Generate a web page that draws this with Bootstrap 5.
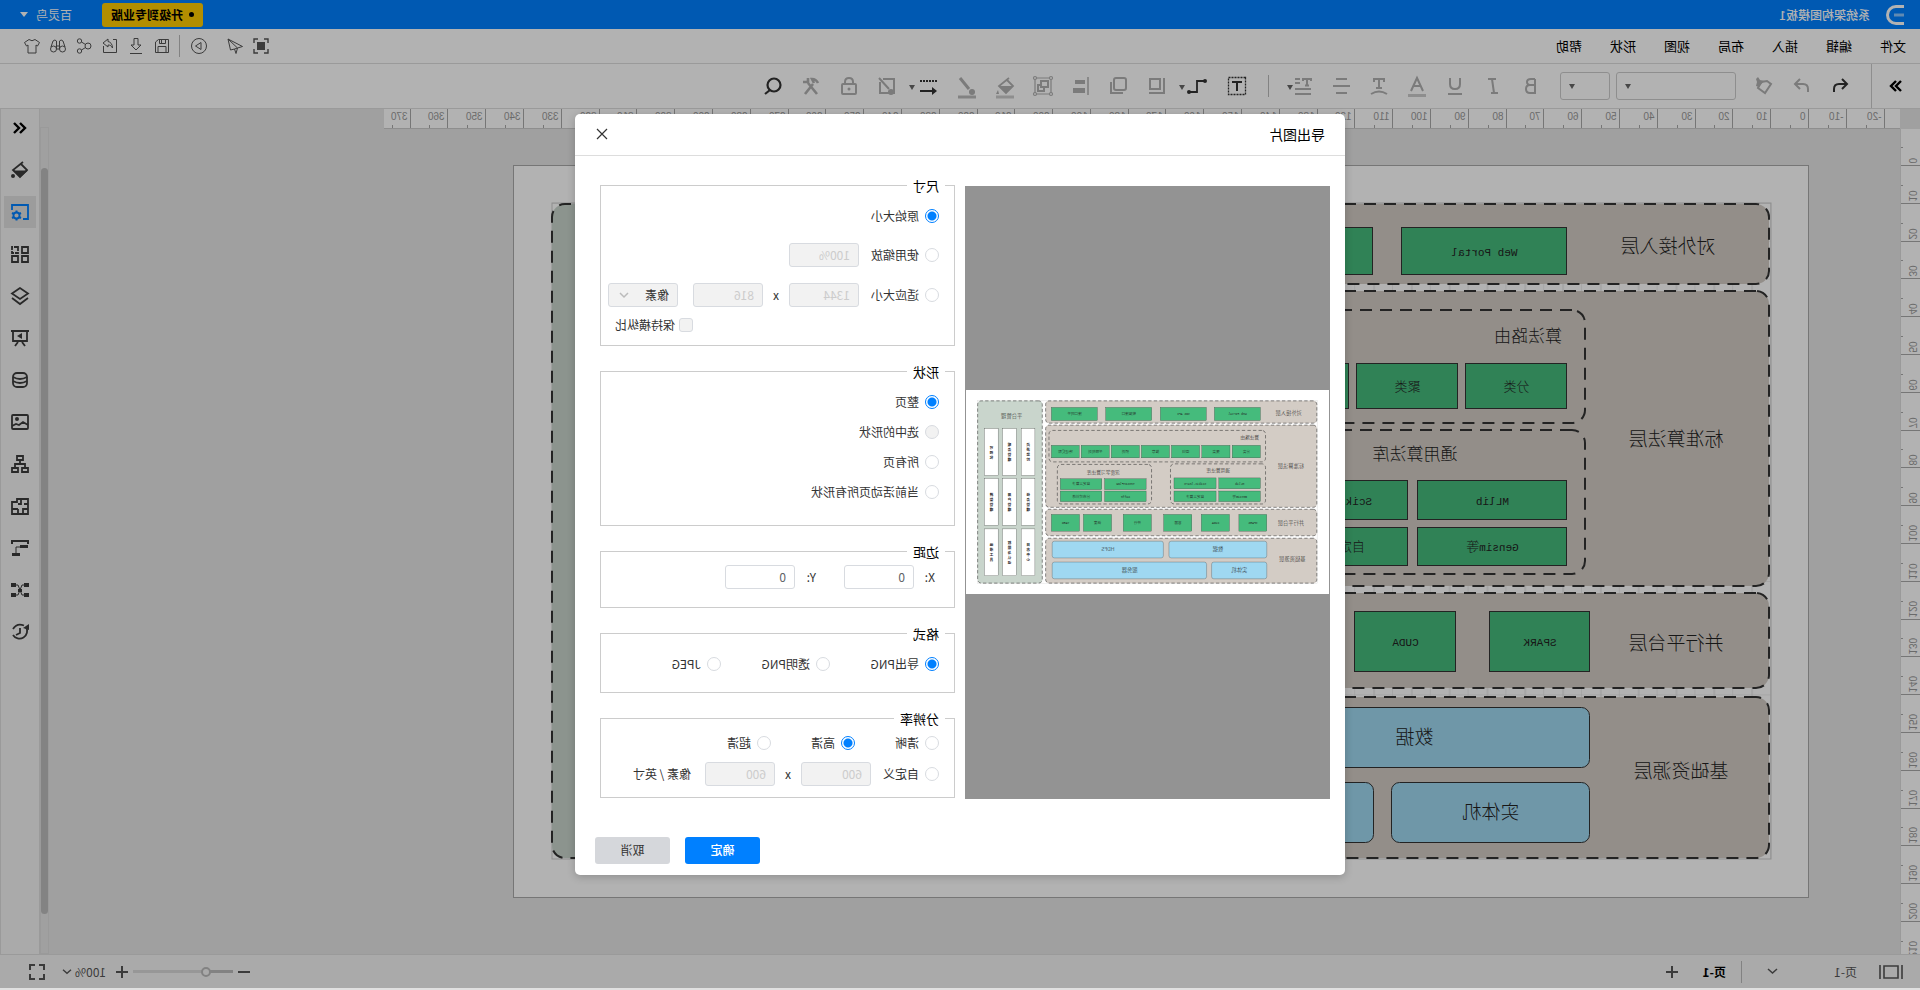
<!DOCTYPE html>
<html lang="zh-CN">
<head>
<meta charset="utf-8">
<meta name="viewport" content="width=device-width, initial-scale=1">
<title>系统架构图模板1</title>
<link href="https://cdn.jsdelivr.net/npm/bootstrap@5.3.0/dist/css/bootstrap.min.css" rel="stylesheet">
<style>
  html { background: #fff; }
  body { height: 100vh; overflow: hidden; transform: scaleX(-1); font: 12px/18px "Noto Sans CJK SC", sans-serif; color: #000; background: #e0e0e0; }
  button, input, select { font: inherit; color: inherit; }
  button { border: 0; background: none; padding: 0; }
  svg { display: block; }
  .glyph { fill: none; stroke: currentColor; width: 18px; height: 18px; flex: none; overflow: visible; }
  .glyph .solid { fill: currentColor; stroke: none; }

  .app-head { height: 29px; background: #0080ff; color: #fff; padding: 0 20px 0 16px; }
  .app-head h1 { font-size: 12px; line-height: 18px; font-weight: 500; margin: 0 0 0 16px; }
  .upgrade { background: #fc0; color: #000; border-radius: 3px; width: 101px; height: 24px; font-weight: 700; margin-right: 30px; }
  .upgrade i { width: 5px; height: 5px; border-radius: 50%; background: #000; margin-right: 6px; }
  .caret-down { border: 4px solid transparent; border-top: 5px solid currentColor; border-bottom: 0; display: inline-block; }
  .menu-row { height: 35px; background: #fff; border-bottom: 1px solid #ddd; padding: 0 19px 0 14px; }
  .menu-row nav { gap: 28px; font-size: 13px; }
  .menu-row a { color: #000; text-decoration: none; }
  .quick { color: #555; }
  .quick button { width: 26px; display: grid; place-items: center; }
  .quick .apart { margin-left: 10px; }
  .quick .glyph { width: 16px; height: 16px; }
  .quick hr, .tools hr, .status hr { width: 1px; height: 22px; background: #bbb; border: 0; margin: 0; opacity: 1; flex: none; }
  .quick hr { margin: 0 4px 0 6px; }

  .tools { height: 45px; background: #fff; border-bottom: 1px solid #ddd; color: #b0b0b0; }
  .tools button { width: 38px; height: 44px; display: grid; place-items: center; position: relative; flex: none; }
  .tools .wide { width: 42px; }
  .tools .on { color: #333; }
  .tools .fold { width: 49px; color: #000; border-right: 1px solid #ccc; margin-right: 12px; }
  .tools .caret-down { position: absolute; right: 3px; top: 21px; color: #666; border-width: 5px 3px 0; }
  .pick { height: 28px; border: 1px solid #ccc; border-radius: 3px; background: #fff; position: relative; }
  .pick select { appearance: none; width: 100%; height: 100%; border: 0; background: none; }
  .pick .caret-down { right: 8px; top: 11px; }

  .stage { background: #e5e5e5; min-height: 0; }
  .rule-x { height: 20px; background: #fff; border-bottom: 1px solid #ccc; width: 1516px; margin-left: 20px; }
  .rule-y { width: 20px; background: #fff; border-right: 1px solid #ddd; flex: none; }
  .rule-x svg, .rule-y svg { width: 100%; height: 100%; overflow: hidden; }
  .ruler-ink { stroke: #aaa; }
  .ruler-ink text { stroke: none; fill: #999; font: 10px "Liberation Sans", sans-serif; }
  .sheet { margin: 36px 0 0 91px; width: 1296px; height: 733px; background: #fff; outline: 1px solid #aaa; outline-offset: -1px; flex: none; }
  .track-wrap { padding-top: 18px; }
  .track { width: 9px; background: #e5e5e5; border: 1px solid #ddd; padding: 40px 0 39px; flex: none; }
  .track div { height: 100%; background: #bcbcbc; border-radius: 4px; }
  .dock { width: 40px; background: #f4f4f4; border-left: 1px solid #ddd; border-right: 1px solid #ddd; color: #3c3c3c; flex: none; padding-top: 3px; }
  .dock button { width: 32px; height: 32px; margin-bottom: 10px; display: grid; place-items: center; flex: none; }
  .dock .picked { background: #e0e0e0; color: #0080ff; }
  .dock .glyph { stroke-width: 1.8; }

  .status { height: 34px; background: #f4f4f4; border-top: 1px solid #ddd; padding: 0 29px 0 17px; color: #555; margin-bottom: 2px; flex: none; }
  .page-pick { width: 111px; padding-left: 22px; }
  .zoomer { width: 100px; height: 14px; appearance: none; background: linear-gradient(90deg, #bbb 26%, #d9d9d9 26%) center/100% 3px no-repeat; margin: 0 5px; }
  .zoomer::-webkit-slider-thumb { appearance: none; width: 10px; height: 10px; border: 2px solid #bbb; border-radius: 50%; background: #f4f4f4; }

  .modal-backdrop { --bs-backdrop-opacity: .3; height: calc(100vh - 2px); }
  .export { --bs-modal-width: 770px; }
  .export .modal-dialog { min-height: calc(100vh - 2px); }
  .export .modal-content { border: 0; border-radius: 5px; box-shadow: 0 2px 8px rgba(0,0,0,.2); min-height: 761px; color: #333; }
  .export .modal-header { height: 42px; padding: 0 21px 0 20px; border-color: #ddd; }
  .export .modal-title { font-size: 14px; line-height: 20px; font-weight: 400; color: #000; }
  .export .modal-body { padding: 20px 25px 0 15px; gap: 10px; }
  .thumb { width: 365px; height: 613px; background: #939393; margin-top: 10px; padding: 0 1px; flex: none; }
  .thumb svg { width: 363px; height: 204px; background: #fff; }
  .export fieldset { border: 1px solid #ccc; padding: 0 0 0 5px; margin: 0 0 16px; min-width: 0; }
  .export legend { float: none; width: auto; font-size: 13px; line-height: 20px; color: #000; margin: 0 0 0 4px; padding: 0 6px; }
  .export .roomy legend { margin-bottom: 5px; }
  .line { height: 30px; padding-left: 10px; display: flex; align-items: center; }
  .tall { height: 40px; }
  .keep { padding-right: 14px; margin-top: 1px; }
  .export .form-check-input { width: 14px; height: 14px; margin: 0 6px 0 0; border: 1px solid #d8dbe0; box-shadow: none; float: none; flex: none; opacity: 1; }
  .export .form-check-input:disabled { background: #f2f2f2; }
  .export .form-check-input:checked { border-color: #0080ff; background: radial-gradient(circle, #0080ff 4px, #fff 5px); }
  .box { width: 70px; height: 24px; border: 1px solid #d8dbe0; border-radius: 3px; padding: 0 8px; background: #fff; color: #606266; }
  .box:disabled { background: #f2f2f2; color: #ccc; }
  .unit { position: relative; margin-left: 15px; }
  .unit select.box { appearance: none; color: #333; opacity: 1; background: #f2f2f2; }
  .unit .glyph { position: absolute; right: 11px; top: 7px; width: 10px; height: 10px; color: #bbb; pointer-events: none; }
  .times { width: 26px; text-align: center; }
  .export .modal-footer { border: 0; padding: 0 20px 11px; gap: 15px; margin-top: auto; }
  .act { width: 75px; height: 27px; border-radius: 3px; background: #d5d7db; margin: 0; }
  .act-main { background: #0080ff; color: #fff; font-weight: 500; }

  .layer { fill: #d3ccc5; stroke: #333; stroke-width: 2; stroke-dasharray: 12 8; }
  .side { fill: #c9d5cc; }
  .cells rect { stroke: #333; }
  .cells .g { fill: #45bb7c; } .cells .b { fill: #9fd8f1; } .cells .w { fill: #fff; }
  .words { font: 300 13px "Noto Sans CJK SC", sans-serif; text-anchor: middle; fill: #222; }
  .words .t19 { font-size: 19px; } .words .t17 { font-size: 17px; }
  .words .code { font: 11px "Liberation Mono", monospace; }
</style>
</head>
<body class="d-flex flex-column">

<svg width="0" height="0" class="position-absolute" aria-hidden="true">
  <defs>
    <pattern id="grid" x="38" y="38" width="37.8" height="37.8" patternUnits="userSpaceOnUse"><path d="M0 0H37.8M0 0V37.8M18.9 0V37.8" stroke="#ddd" fill="none"/></pattern>
    <symbol id="chart" viewBox="0 0 1295 732">
      <rect x="38" y="38" width="1219" height="656" fill="url(#grid)" stroke="#ccc"/>
      <rect class="layer" x="40" y="39" width="973" height="80" rx="13"/>
      <rect class="layer" x="40" y="126" width="973" height="295" rx="13"/>
      <rect class="layer" x="40" y="428" width="973" height="95" rx="13"/>
      <rect class="layer" x="40" y="532" width="973" height="161" rx="13"/>
      <rect class="layer" x="224" y="145" width="777" height="113" rx="13"/>
      <rect class="layer" x="224" y="265" width="341" height="144" rx="13"/>
      <rect class="layer" x="633" y="267" width="338" height="142" rx="13"/>
      <rect class="layer side" x="1025" y="39" width="232" height="654" rx="13"/>
      <g class="cells" id="cells"></g>
      <g class="words" id="words"></g>
    </symbol>
  </defs>
</svg>

<header class="app-head d-flex align-items-center">
  <svg width="18" height="20" viewBox="0 0 18 20" fill="none" stroke="#fff" stroke-width="3"><path d="M0 1.500H8a8.500 8.500 0 0 1 0 17H0"/><path d="M0 10h10" stroke="#8cc6ff"/></svg>
  <h1>系统架构图模板1</h1>
  <button class="upgrade ms-auto d-flex align-items-center justify-content-center"><i></i>升级到专业版</button>
  <button class="d-flex align-items-center">百灵鸟<span class="caret-down ms-2"></span></button>
</header>

<div class="menu-row d-flex align-items-center justify-content-between flex-shrink-0">
  <nav class="d-flex"><a href="#">文件</a><a href="#">编辑</a><a href="#">插入</a><a href="#">布局</a><a href="#">视图</a><a href="#">形状</a><a href="#">帮助</a></nav>
  <div class="quick d-flex align-items-center">
    <button aria-label="适应"><svg class="glyph" viewBox="0 0 16 16"><path d="M1 5V1h4M11 1h4v4M15 11v4h-4M5 15H1v-4" stroke-width="1.4"/><path class="solid" d="M4 4h8v8H4z"/></svg></button>
    <button aria-label="发送"><svg class="glyph" viewBox="0 0 16 16"><path d="M15 1 .5 8.500l5 1.500 1.500 5.500L8.500 11l4 1zM15 1 5.500 10l3 1"/></svg></button>
    <button class="apart" aria-label="播放"><svg class="glyph" viewBox="0 0 16 16"><circle cx="8" cy="8" r="7.500"/><path d="M6 4.500v7L11.500 8z"/></svg></button>
    <hr>
    <button aria-label="保存"><svg class="glyph" viewBox="0 0 16 16"><path d="M1.500 1.500h10l3 2.500v10.500h-13zM4.500 1.500v4h6v-4M8.500 2v3M4 14V8.500h8V14"/></svg></button>
    <button aria-label="下载"><svg class="glyph" viewBox="0 0 16 16"><path d="M6 .5h4V7h3l-5 5-5-5h3zM2 15.500h12"/></svg></button>
    <button aria-label="导出"><svg class="glyph" viewBox="0 0 16 16"><path d="M5 1.500H1.500v13h13V8M10 1l5 4-5 4V7C7.500 7 6.500 8 5.500 10c0-4 2-6 4.500-6.500z"/></svg></button>
    <button aria-label="分享"><svg class="glyph" viewBox="0 0 16 16"><circle cx="4" cy="8" r="3"/><circle cx="12.500" cy="3" r="2.200"/><circle cx="12.500" cy="13" r="2.200"/><path d="m6.500 6.500 4-2.500m-4 5.500 4 2.500"/></svg></button>
    <button aria-label="查找"><svg class="glyph" viewBox="0 0 16 16"><circle cx="3.500" cy="11" r="3"/><circle cx="12.500" cy="11" r="3"/><path d="M1 9 3 3q2-2 3.500 0v8M15 9l-2-6q-2-2-3.500 0v8M6.500 8h3m-3 3h3"/></svg></button>
    <button aria-label="主题"><svg class="glyph" viewBox="0 0 16 16"><path d="M5 1.500q3 2.500 6 0l4.500 3-2 3.500-1.500-1v8H4V7L2.500 8 .5 4.500z"/></svg></button>
  </div>
</div>

<div class="tools d-flex align-items-center flex-shrink-0">
  <button class="fold" aria-label="展开"><svg class="glyph" viewBox="0 0 18 18" stroke-width="2.400"><path d="m4 4 5 5-5 5m5-10 5 5-5 5"/></svg></button>
  <button class="on" aria-label="撤销"><svg class="glyph" viewBox="0 0 18 18" stroke-width="2"><path d="m7 2-5 5 5 5M2 7h8q5 0 5 5v3"/></svg></button>
  <button aria-label="重做"><svg class="glyph" viewBox="0 0 18 18" stroke-width="2"><path d="m11 2 5 5-5 5m5-5H8q-5 0-5 5v3"/></svg></button>
  <button aria-label="格式刷"><svg class="glyph" viewBox="0 0 18 18" stroke-width="2"><path d="m2 7 6 9 7-5-3-6-6-1z"/><path class="solid" d="m9 4 4-1 2-3 2 2-1 3 1 4-3 1z"/></svg></button>
  <div class="pick" style="width:120px;margin-left:9px"><select aria-label="字体"><option></option></select><span class="caret-down"></span></div>
  <div class="pick" style="width:50px;margin:0 10px 0 6px"><select aria-label="字号"><option></option></select><span class="caret-down"></span></div>
  <button aria-label="粗体"><svg class="glyph" viewBox="0 0 18 18" stroke-width="2"><path d="M5 2v14h5q4 0 4-4t-4-4H5M5 2h4q4 0 4 3t-4 3"/></svg></button>
  <button aria-label="斜体"><svg class="glyph" viewBox="0 0 18 18" stroke-width="2"><path d="M6 2h8M4 16h7M10 2 8 16"/></svg></button>
  <button aria-label="下划线"><svg class="glyph" viewBox="0 0 18 18" stroke-width="2"><path d="M4 1v6q0 5 5 5t5-5V1M2 17h14"/></svg></button>
  <button aria-label="颜色"><svg class="glyph" viewBox="0 0 18 18" stroke-width="2"><path d="M3 14 9 1l6 13M5 9h8"/><path d="M0 18.500h18" stroke-width="3" stroke="#ccc"/></svg></button>
  <button aria-label="文字方向"><svg class="glyph" viewBox="0 0 18 18" stroke-width="2"><path d="M4 5V2h10v3M9 2v9M6 11h6M1 17q8-5 16 0"/></svg></button>
  <button aria-label="对齐"><svg class="glyph" viewBox="0 0 18 18" stroke-width="2"><path d="M3 2h11M0 9h17M3 16h11"/></svg></button>
  <button aria-label="行距"><svg class="glyph" viewBox="0 0 18 18" stroke-width="2"><path d="M1 4V2h8v2M5 2v7M3 8.500h4M12 2h5m-5 4h5M1 12h16M1 17h16"/></svg><span class="caret-down"></span></button>
  <hr style="margin:0 12px 0 15px">
  <button class="on" aria-label="文本框"><svg class="glyph" viewBox="0 0 18 18" stroke-width="2"><path d="M.5.500h17v17H.5z" stroke-width="1.300" stroke-dasharray="2 1"/><path d="M4 5h10M9 5v9"/></svg></button>
  <button class="on wide" aria-label="连接线"><svg class="glyph" viewBox="0 0 18 18" stroke-width="1.800"><path d="M1 4h8v11h8"/><circle class="solid" cx="1" cy="4" r="2"/><circle class="solid" cx="17" cy="15" r="2"/></svg><span class="caret-down"></span></button>
  <button aria-label="置顶"><svg class="glyph" viewBox="0 0 18 18" stroke-width="2"><path d="M6 2h10v10H6zM2 1v15h15"/></svg></button>
  <button aria-label="置底"><svg class="glyph" viewBox="0 0 18 18" stroke-width="2"><rect x="2" y="1" width="12" height="12" rx="2"/><path d="M5 16h12V5"/></svg></button>
  <button aria-label="对齐对象"><svg class="glyph" viewBox="0 0 18 18" stroke-width="1.500"><path d="M2 0v18"/><path class="solid" d="M5 3h10v4H5zM5 11h12v5H5z"/></svg></button>
  <button aria-label="组合"><svg class="glyph" viewBox="0 0 18 18" stroke-width="1.200"><path d="M1 1h16v16H1z"/><path d="M4 4h7v6H4zM8 10v4h6V8h-3" stroke-width="2"/><g fill="#fff"><circle cx="1" cy="1" r="1.500"/><circle cx="17" cy="1" r="1.500"/><circle cx="1" cy="17" r="1.500"/><circle cx="17" cy="17" r="1.500"/></g></svg></button>
  <button aria-label="填充"><svg class="glyph" viewBox="0 0 18 18" stroke-width="1.800"><path d="m5 1 10 8-7 7-7-7 6-6"/><path class="solid" d="M1 9h14l-7 7zM16 13l2 4h-3z"/><path d="M0 20h18" stroke-width="3" stroke="#ccc"/></svg></button>
  <button aria-label="线条"><svg class="glyph" viewBox="0 0 18 18" stroke-width="3"><path d="M16 1 7 12"/><circle class="solid" cx="4" cy="15" r="3"/><path d="M0 20h18" stroke="#bbb"/></svg></button>
  <button class="on wide pe-1" aria-label="线型"><svg class="glyph" viewBox="0 0 18 18" stroke-width="2"><path d="M1 4h17" stroke-dasharray="2 1"/><path d="M4 14h14"/><path class="solid" d="m6 10-5 4 5 4z"/></svg><span class="caret-down"></span></button>
  <button aria-label="阴影"><svg class="glyph" viewBox="0 0 18 18" stroke-width="2"><path d="M13 2H2v14h14V5M17 1 7 12"/><circle class="solid" cx="5" cy="15" r="3"/></svg></button>
  <button aria-label="锁定"><svg class="glyph" viewBox="0 0 18 18" stroke-width="2"><rect x="2" y="7" width="14" height="10" rx="1"/><path d="M5 7V5q0-4 4-4t4 4v2"/><circle class="solid" cx="9" cy="12" r="1.500"/></svg></button>
  <button aria-label="工具"><svg class="glyph" viewBox="0 0 18 18" stroke-width="2.600"><path d="m3 17 9-11m3 11L7 7M2 6q2-4 6-4L6 6M12 1v4h5" /></svg></button>
  <button class="on" aria-label="搜索"><svg class="glyph" viewBox="0 0 18 18" stroke-width="2.200"><circle cx="8" cy="8" r="6.500"/><path d="m12 13 5 4"/></svg></button>
</div>

<main class="stage d-flex flex-grow-1">
  <div class="d-flex flex-column flex-grow-1" style="min-width:0">
    <div class="rule-x flex-shrink-0"><svg><g class="ruler-ink" id="ruleX"></g></svg></div>
    <div class="d-flex flex-grow-1" style="min-height:0">
      <div class="rule-y"><svg><g class="ruler-ink" id="ruleY"></g></svg></div>
      <div class="sheet"><svg width="1295" height="732"><use href="#chart"/></svg></div>
    </div>
  </div>
  <div class="track-wrap d-flex flex-column"><div class="track flex-grow-1"><div></div></div></div>
  <aside class="dock d-flex flex-column align-items-center">
    <button class="text-black" aria-label="收起"><svg class="glyph" viewBox="0 0 18 18" style="stroke-width:2.4"><path d="M9 4 4 9l5 5m6-10-5 5 5 5"/></svg></button>
    <button aria-label="样式"><svg class="glyph" viewBox="0 0 18 18"><path d="m6 1 10 8-7 7-7-7 6-6"/><path class="solid" d="M1 9.500h15l-7 7z"/><circle class="solid" cx="16" cy="15" r="2"/></svg></button>
    <button class="picked" aria-label="设置"><svg class="glyph" viewBox="0 0 18 18"><path d="M6 16H1V2h16v5"/><circle cx="12.500" cy="12.500" r="3"/><path d="M12.500 7.500v2m0 6v2M8 10l2 1m5 3 2 1m-9 0 2-1m5-3 2-1" stroke-width="2"/></svg></button>
    <button aria-label="符号库"><svg class="glyph" viewBox="0 0 18 18"><path d="M1 2h6v6H1zM1 11h6v6H1zM11 11h6v6h-6z"/><path d="M11 2h6v6h-6z" stroke-dasharray="4 1"/></svg></button>
    <button aria-label="图层"><svg class="glyph" viewBox="0 0 18 18"><path d="m9 1 8 5.500L9 12 1 6.500zM1 11l8 6 8-6"/></svg></button>
    <button aria-label="演示"><svg class="glyph" viewBox="0 0 18 18"><path d="M0 2h18M2 2v10h14V2M7 13l-3 4m7-4 3 4"/><path class="solid" d="m7 4 5 3-5 3z"/></svg></button>
    <button aria-label="数据"><svg class="glyph" viewBox="0 0 18 18"><rect x="2" y="2" width="14" height="14" rx="4"/><path d="M2 6q7 4 14 0M2 10q7 4 14 0"/></svg></button>
    <button aria-label="图片"><svg class="glyph" viewBox="0 0 18 18"><rect x="1" y="2" width="16" height="14" rx="1"/><circle class="solid" cx="12" cy="6" r="2"/><path d="m1 12 5-3 4 3 3-1 4 2"/></svg></button>
    <button aria-label="组织"><svg class="glyph" viewBox="0 0 18 18"><path d="M6 1h6v4H6zM1 13h6v4H1zM11 13h6v4h-6zM9 5v4M4 13V9h10v4"/></svg></button>
    <button aria-label="平面图"><svg class="glyph" viewBox="0 0 18 18"><path d="M1 2h11v3h5v12H1zM1 7h4m3-5v5h3M1 12h5v5m5 0v-5m0 0h6"/></svg></button>
    <button aria-label="甘特图"><svg class="glyph" viewBox="0 0 18 18"><path d="M0 2h18M1 2v3M17 2v3" stroke-width="2"/><path d="M1 7.500h8M9 15.500h8" stroke-width="3"/><path d="M9 8h4v7" stroke-width="1"/></svg></button>
    <button aria-label="导图"><svg class="glyph" viewBox="0 0 18 18"><path d="M5 4h2l4 10h2M5 14h2l4-10h2" stroke-width="1"/><path class="solid" d="M0 2h5v4H0zM13 2h5v4h-5zM0 12h5v4H0zM13 12h5v4h-5zM7 8h4v3H7z"/></svg></button>
    <button aria-label="历史"><svg class="glyph" viewBox="0 0 18 18"><path d="M3 4a7.500 7.500 0 1 0 13 8M5 2.500q7-3 11 3.500M9 5v5l4 2"/><path class="solid" d="M0 7V1l6 4z"/></svg></button>
  </aside>
</main>

<footer class="status d-flex align-items-center">
  <svg class="glyph" style="width:24px;height:16px" viewBox="0 0 24 16" stroke-width="1.600"><path d="M1 1v14M23 1v14M5 2h14v12H5z"/></svg>
  <button class="page-pick d-flex align-items-center justify-content-between">页-1<svg class="glyph" style="width:9px;height:9px" viewBox="0 0 9 9" stroke-width="1.500"><path d="m0 2 4.500 4L9 2"/></svg></button>
  <hr style="margin:0 15px 0 26px">
  <button class="fw-bold text-black">页-1</button>
  <button style="margin-left:24px" aria-label="新页"><svg class="glyph" style="width:12px;height:12px" viewBox="0 0 12 12" stroke-width="2"><path d="M6 0v12M0 6h12"/></svg></button>
  <button class="ms-auto" aria-label="缩小"><svg class="glyph" style="width:12px;height:12px" viewBox="0 0 12 12" stroke-width="2"><path d="M0 6h12"/></svg></button>
  <input class="zoomer" type="range" min="0" max="100" value="25" aria-label="缩放">
  <button aria-label="放大"><svg class="glyph" style="width:12px;height:12px" viewBox="0 0 12 12" stroke-width="2"><path d="M6 0v12M0 6h12"/></svg></button>
  <button class="d-flex align-items-center gap-1" style="margin:0 18px 0 10px">100%<svg class="glyph" style="width:8px;height:8px" viewBox="0 0 9 9" stroke-width="1.500"><path d="m0 2 4.500 4L9 2"/></svg></button>
  <button aria-label="全屏"><svg class="glyph" style="width:16px;height:16px" viewBox="0 0 16 16" stroke-width="2"><path d="M1 6V1h5M10 1h5v5M15 10v5h-5M6 15H1v-5"/></svg></button>
</footer>

<div class="modal-backdrop show"></div>
<div class="modal d-block export" role="dialog" aria-labelledby="exportTitle">
  <div class="modal-dialog modal-dialog-centered my-0">
    <div class="modal-content">
      <div class="modal-header flex-shrink-0">
        <h2 class="modal-title" id="exportTitle">导出图片</h2>
        <button aria-label="关闭"><svg class="glyph" style="width:12px;height:12px" viewBox="0 0 12 12" stroke-width="1.200"><path d="m1 1 10 10M11 1 1 11"/></svg></button>
      </div>
      <div class="modal-body d-flex flex-grow-0">
        <div class="thumb d-flex align-items-center"><svg viewBox="0 0 1295 732"><use href="#chart"/></svg></div>
        <form class="flex-grow-1">
          <fieldset class="roomy" style="height:170px">
            <legend>尺寸</legend>
            <label class="line"><input class="form-check-input" type="radio" name="size" checked>原始大小</label>
            <div class="line tall mt-1"><label class="d-flex align-items-center me-2"><input class="form-check-input" type="radio" name="size">使用缩放</label><input class="box ms-1" value="100%" disabled aria-label="缩放比例"></div>
            <div class="line tall"><label class="d-flex align-items-center me-2"><input class="form-check-input" type="radio" name="size">适应大小</label><input class="box ms-1" value="1344" disabled aria-label="宽"><span class="times">x</span><input class="box" value="816" disabled aria-label="高"><span class="unit"><select class="box" disabled aria-label="单位"><option>像素</option></select><svg class="glyph" viewBox="0 0 10 10" stroke-width="1.500"><path d="m1 3 4 4 4-4"/></svg></span></div>
            <label class="keep d-flex align-items-center justify-content-end"><input class="form-check-input me-1" type="checkbox" disabled>保持横纵比</label>
          </fieldset>
          <fieldset class="roomy" style="height:164px">
            <legend>形状</legend>
            <label class="line"><input class="form-check-input" type="radio" name="shape" checked>整页</label>
            <label class="line"><input class="form-check-input" type="radio" name="shape" disabled>选中的形状</label>
            <label class="line"><input class="form-check-input" type="radio" name="shape">所有页</label>
            <label class="line"><input class="form-check-input" type="radio" name="shape">当前活动页所有形状</label>
          </fieldset>
          <fieldset style="height:66px">
            <legend>边距</legend>
            <div class="line"><label for="mx" style="width:25px" class="ps-1">X:</label><input class="box" id="mx" value="0"><label for="my" style="width:49px;padding-left:28px">Y:</label><input class="box" id="my" value="0"></div>
          </fieldset>
          <fieldset style="height:69px">
            <legend>格式</legend>
            <div class="line tall"><label class="d-flex align-items-center" style="width:109px"><input class="form-check-input" type="radio" name="format" checked>导出PNG</label><label class="d-flex align-items-center" style="width:109px"><input class="form-check-input" type="radio" name="format">透明PNG</label><label class="d-flex align-items-center"><input class="form-check-input" type="radio" name="format">JPEG</label></div>
          </fieldset>
          <fieldset class="mb-0" style="height:89px">
            <legend>分辨率</legend>
            <div class="line" style="height:28px"><label class="d-flex align-items-center" style="width:84px"><input class="form-check-input" type="radio" name="dpi">清晰</label><label class="d-flex align-items-center" style="width:84px"><input class="form-check-input" type="radio" name="dpi" checked>高清</label><label class="d-flex align-items-center"><input class="form-check-input" type="radio" name="dpi">超清</label></div>
            <div class="line" style="height:34px"><label class="d-flex align-items-center me-2"><input class="form-check-input" type="radio" name="dpi">自定义</label><input class="box ms-1" value="600" disabled aria-label="横向分辨率"><span class="times">x</span><input class="box" value="600" disabled aria-label="纵向分辨率"><span style="margin-left:14px">像素 / 英寸</span></div>
          </fieldset>
        </form>
      </div>
      <div class="modal-footer">
        <button class="act act-main">确定</button>
        <button class="act">取消</button>
      </div>
    </div>
  </div>
</div>

<script src="https://cdn.jsdelivr.net/npm/bootstrap@5.3.0/dist/js/bootstrap.bundle.min.js"></script>
<script>
  // Rulers: one labelled tick per 10 mm, a short one half way.
  const step = 96 / 2.54;
  let x = '', y = '';
  for (let i = -2; i <= 37; i++) {
    const p = Math.round(92 + i * step) - .5, h = Math.round(p + step / 2) - .5;
    x += `<path d="M${p} 0V20M${h} 16V20"/><text x="${p + 3}" y="11">${i * 10}</text>`;
  }
  for (let i = 0; i <= 21; i++) {
    const p = Math.round(36 + i * step) + .5, h = Math.round(p - step / 2) + .5;
    y += `<path d="M0 ${p}H20M17 ${h}H20"/><text transform="translate(11 ${p - 2}) rotate(-90)">${i * 10}</text>`;
  }
  ruleX.innerHTML = x;
  ruleY.innerHTML = y;

  // Nodes: kind, left, top, width, height, label
  const nodes = [
    ['g',242,62,165,47,'Web Portal'],['g',436,62,165,47,'SDK API'],['g',632,62,165,47,'数据接口'],['g',827,62,165,47,'接口网关'],
    ['g',242,198,101,45,'分类'],['g',351,198,101,45,'聚类'],['g',460,198,101,45,'回归'],['g',568,198,101,45,'推荐'],['g',676,198,101,45,'预测'],['g',784,198,101,45,'关联规则'],['g',892,198,100,45,'特征提取'],
    ['g',242,315,149,39,'MLlib'],['g',401,315,151,39,'Scikit-learn'],['g',242,362,149,38,'Gensim等'],['g',401,362,151,38,'自定义算法'],
    ['g',652,318,149,39,'TensorFlow'],['g',811,318,149,39,'自定义算法'],['g',652,362,149,38,'Caffe'],['g',811,362,149,38,'分布式训练'],
    ['g',219,446,100,60,'SPARK'],['g',353,446,101,60,'CUDA'],['g',488,446,101,60,'容器'],['g',633,446,101,60,'并行'],['g',776,446,101,60,'调度'],['g',891,446,101,60,'YARN'],
    ['b',219,542,351,60,'数据'],['b',590,542,399,60,'HDFS'],['b',219,617,198,60,'实体机'],['b',435,617,554,60,'服务器']
  ];
  const columns = [['资源监控','任务管理','日志中心'],['服务管理','用户管理','权限与认证'],['可视化','模型管理','运维工具']];
  columns.forEach((c, i) => c.forEach((t, j) => nodes.push(['w', [1051,1118,1183][i], [138,317,498][j], 49, 168, t])));
  let boxes = '', text = '';
  for (const [k, l, t, w, h, s] of nodes) {
    boxes += `<rect class="${k}" x="${l + .5}" y="${t + .5}" width="${w}" height="${h}" rx="${k === 'b' ? 8 : 0}"/>`;
    const cx = l + w / 2, cy = t + h / 2;
    if (k === 'w') [...s].forEach((ch, n) => text += `<text font-weight="700" x="${cx}" y="${cy + 6 + (n - (s.length - 1) / 2) * 18}">${ch}</text>`);
    else if (s === 'Gensim等') text += `<text x="${cx}" y="${cy + 5}"><tspan class="code">Gensim</tspan>等</text>`;
    else text += `<text class="${k === 'b' ? 't19' : /^[\x20-\x7e]+$/.test(s) ? 'code' : ''}" x="${cx}" y="${cy + (k === 'b' ? 7 : 5)}">${s}</text>`;
  }
  for (const [s, cx, by, c] of [['对外接入层',141,88,'t19'],['标准算法层',133,281,'t19'],['并行平台层',133,485,'t19'],['基础资源层',128,613,'t19'],['算法路由',281,177,'t17'],['通用算法库',394,295,'t17'],['深度学习算法库',806,300,'t17'],['平台管理',1135,100,'t19']])
    text += `<text class="${c}" x="${cx}" y="${by}">${s}</text>`;
  cells.innerHTML = boxes;
  words.innerHTML = text;
</script>
</body>
</html>
